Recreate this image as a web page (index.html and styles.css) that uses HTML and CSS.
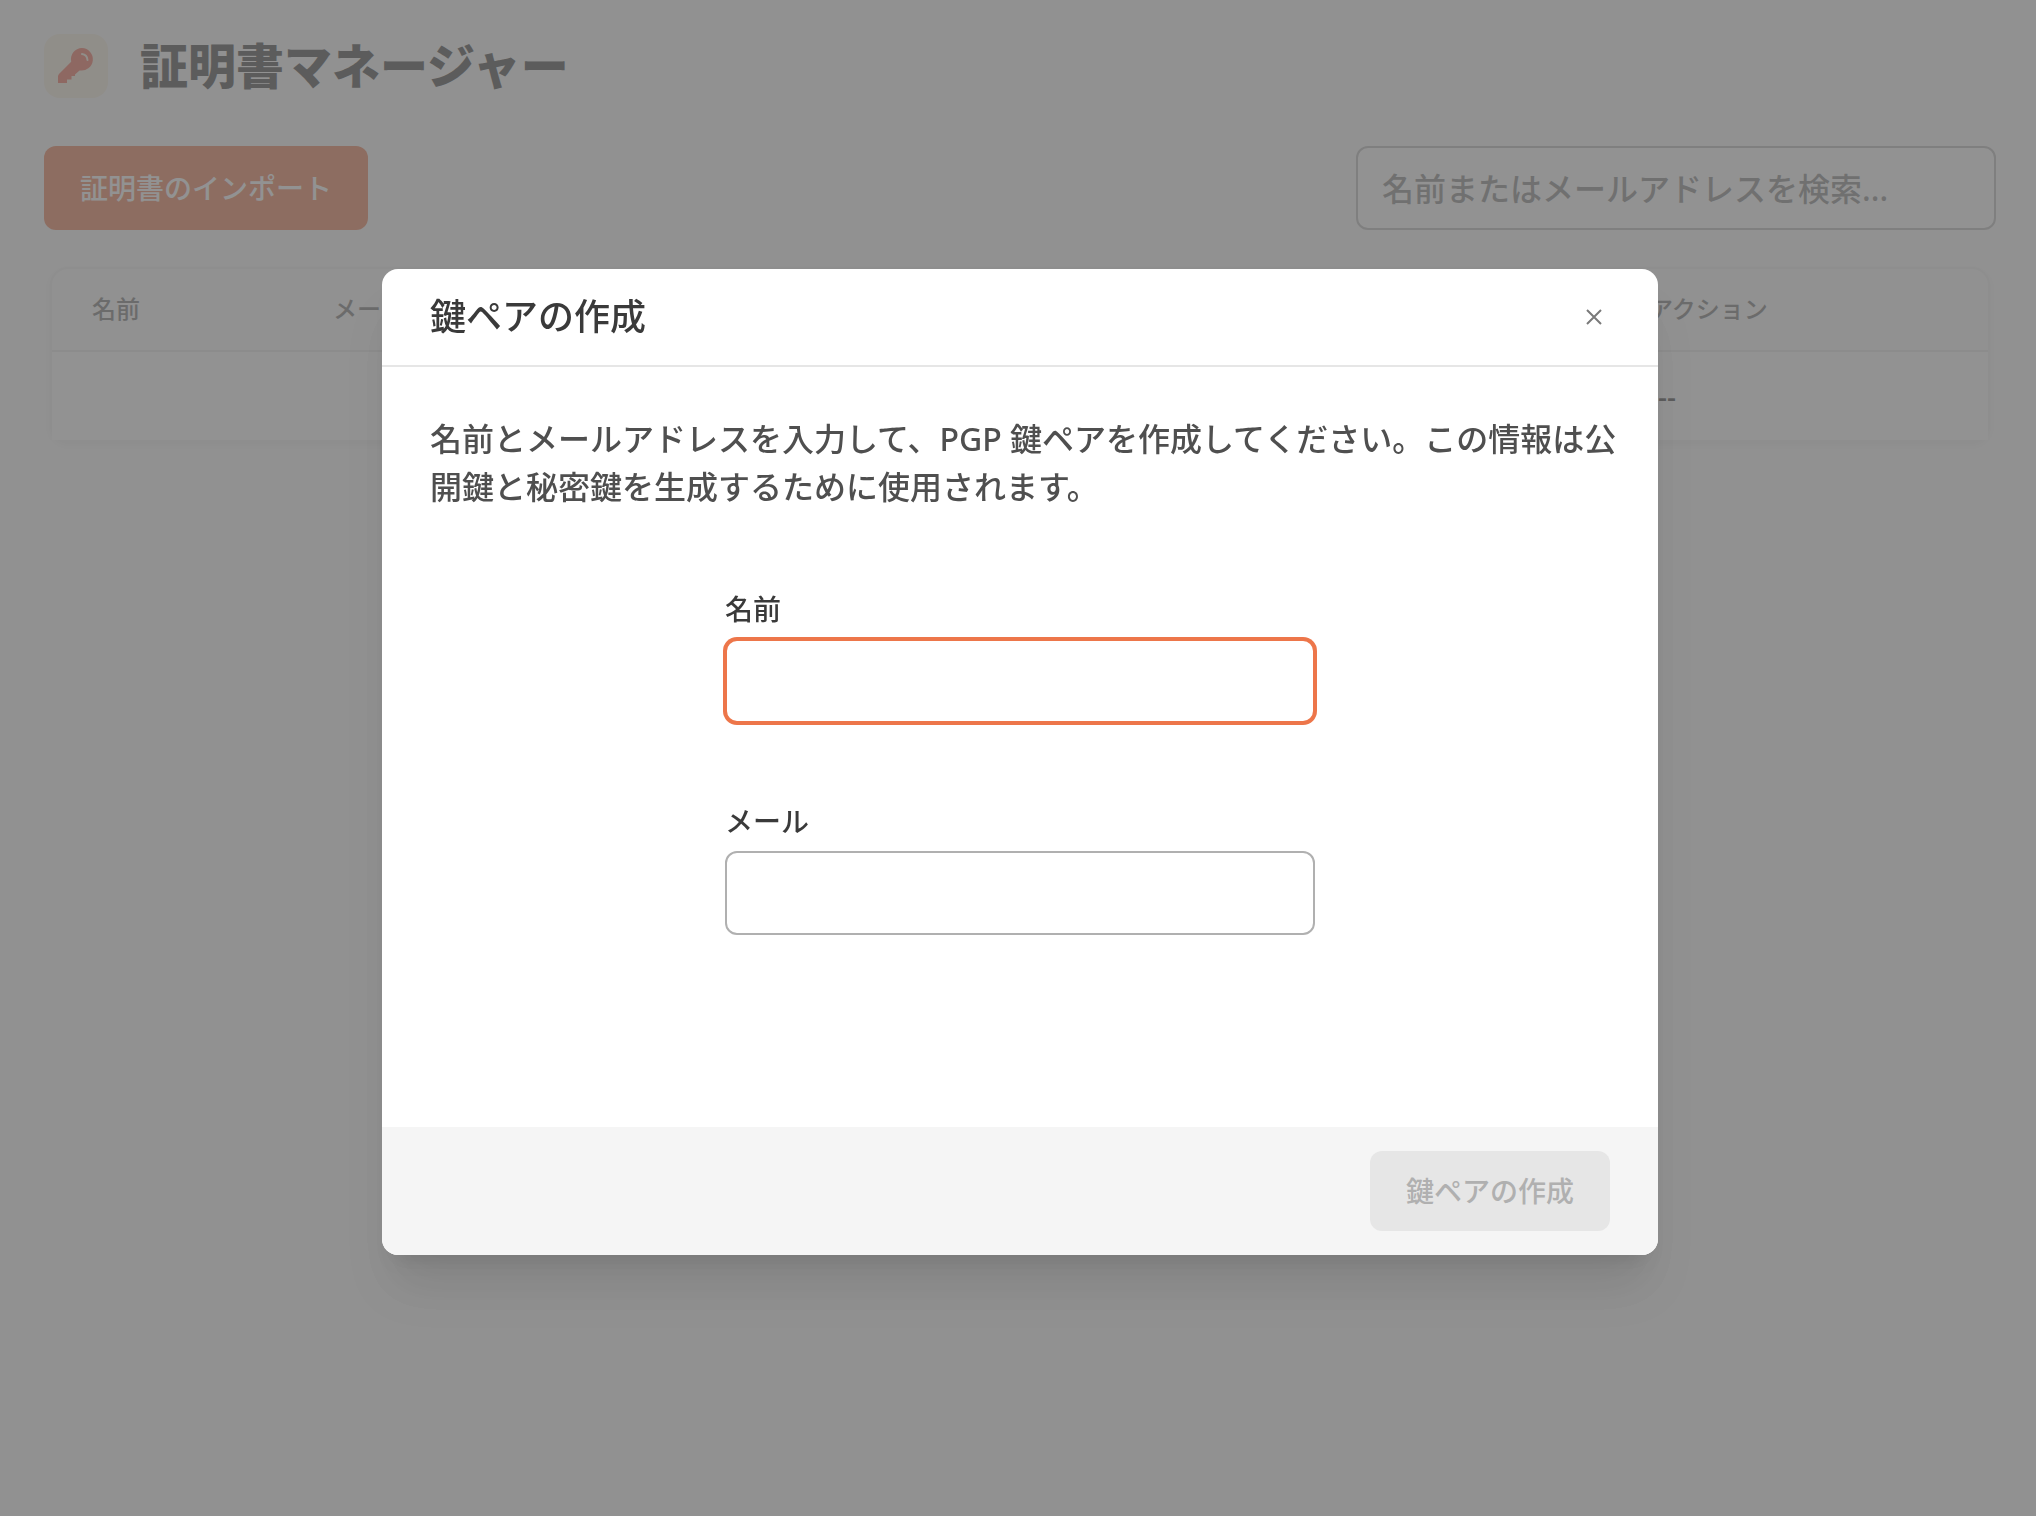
FILE: index.html
```html
<!DOCTYPE html>
<html lang="ja">
<head>
<meta charset="utf-8">
<meta name="viewport" content="width=device-width, initial-scale=1">
<title>証明書マネージャー</title>
<link rel="stylesheet" href="styles.css">
</head>
<body>
<main class="page">
  <header class="page-header">
    <span class="page-icon">
      <svg viewBox="0 0 64 64" width="64" height="64" aria-hidden="true">
        <path class="key-shape" d="M38 14a11.300 11.300 0 1 1-2.500 22.400L31 40.500V42h-3.500v3.500H23V49h-8.500q-.5 0-.5-.5v-6q0-1.500 1-2.500l12.200-12.200A11.300 11.300 0 0 1 38 14z"/>
        <path class="key-shine" d="M38 20q5 .5 5.500 6"/>
      </svg>
    </span>
    <h1 class="page-title">証明書マネージャー</h1>
  </header>
  <div class="toolbar">
    <button type="button" class="button button-primary">証明書のインポート</button>
    <input type="search" class="input search" aria-label="検索" placeholder="名前またはメールアドレスを検索...">
  </div>
  <div class="table-card">
    <table class="table">
      <colgroup><col class="col-name"><col><col class="col-action"></colgroup>
      <thead>
        <tr><th scope="col">名前</th><th scope="col">メール</th><th scope="col">アクション</th></tr>
      </thead>
      <tbody>
        <tr><td></td><td></td><td>---</td></tr>
      </tbody>
    </table>
  </div>
</main>
<div class="overlay">
  <form class="modal" role="dialog" aria-modal="true" aria-labelledby="modal-title">
    <header class="modal-header">
      <h2 class="modal-title" id="modal-title">鍵ペアの作成</h2>
      <button type="button" class="close" aria-label="閉じる">
        <svg viewBox="0 0 16 16" width="16" height="16" aria-hidden="true"><path d="M1 1l14 14M15 1L1 15"/></svg>
      </button>
    </header>
    <div class="modal-body">
      <p class="modal-text">名前とメールアドレスを入力して、PGP 鍵ペアを作成してください。この情報は公開鍵と秘密鍵を生成するために使用されます。</p>
      <div class="fields">
        <div class="field">
          <label for="name">名前</label>
          <input class="input input-active" id="name" type="text">
        </div>
        <div class="field">
          <label for="email">メール</label>
          <input class="input" id="email" type="email">
        </div>
      </div>
    </div>
    <footer class="modal-footer">
      <button type="submit" class="button button-submit" disabled>鍵ペアの作成</button>
    </footer>
  </form>
</div>
</body>
</html>
```
FILE: styles.css
```css
* {
  box-sizing: border-box;
}

body {
  margin: 0;
  min-height: 100vh;
  background: #fafafa;
  color: #3a3a3a;
  font-family: "Noto Sans", "Noto Sans CJK JP", sans-serif;
  font-weight: 500;
}

h1, h2, p {
  margin: 0;
}

button, input {
  font: inherit;
  color: inherit;
}

.page {
  padding: 34px 40px 48px 44px;
}

.page-header {
  display: flex;
  align-items: center;
  gap: 32px;
  height: 64px;
  margin-bottom: 48px;
}

.page-icon {
  width: 64px;
  height: 64px;
  border-radius: 16px;
  background: #f8eedd;
}

.page-icon svg {
  display: block;
}

.key-shape {
  fill: #f0644e;
}

.key-shine {
  fill: none;
  stroke: #f8eedd;
  stroke-width: 2;
  stroke-linecap: round;
}

.page-title {
  font-size: 48px;
  line-height: 64px;
  font-weight: 900;
}

.toolbar {
  display: flex;
  justify-content: space-between;
  align-items: center;
}

.button {
  padding: 0 36px;
  border: 0;
  border-radius: 12px;
  font-size: 28px;
  line-height: 40px;
}

.button-primary {
  height: 84px;
  background: #ed764a;
  color: #fff;
}

.input {
  height: 84px;
  padding: 0 24px;
  border: 2px solid #b0b0b0;
  border-radius: 12px;
  background: #fff;
  font-size: 32px;
  outline: none;
}

.search {
  width: 640px;
  border-color: #b8b8b8;
  appearance: none;
}

.search::placeholder {
  color: #838383;
  opacity: 1;
}

.table-card {
  margin: 39px 8px 0;
  border-radius: 16px;
  box-shadow: 0 0 0 2px #f0f0f0, 0 3px 8px #e4e4e4;
  background: #fafafa;
}

.table {
  width: 100%;
  border-spacing: 0;
  table-layout: fixed;
  text-align: left;
}

.col-name {
  width: 241px;
}

.col-action {
  width: 379px;
}

.table th {
  height: 83px;
  padding: 0 40px 2px;
  border-bottom: 2px solid #e8e8e8;
  color: #707070;
  font-size: 24px;
  line-height: 32px;
  font-weight: 500;
}

.table td {
  height: 88px;
  padding: 0 40px;
  background: #fff;
  font-size: 28px;
}

.overlay {
  position: fixed;
  inset: 0;
  display: flex;
  align-items: center;
  justify-content: center;
  padding: 8px 0 0 4px;
  background: rgba(105, 105, 105, 0.73);
}

.modal {
  display: flex;
  flex-direction: column;
  width: 1276px;
  max-width: 100%;
  max-height: 100%;
  overflow: auto;
  border-radius: 16px;
  background: #fff;
  box-shadow: 0 40px 50px -10px rgba(0, 0, 0, 0.1), 0 16px 20px -12px rgba(0, 0, 0, 0.1);
}

.modal-header {
  display: flex;
  align-items: center;
  justify-content: space-between;
  padding: 24px 48px;
  border-bottom: 2px solid #e6e6e6;
}

.modal-title {
  font-size: 36px;
  line-height: 48px;
  font-weight: 500;
}

.close {
  display: grid;
  place-items: center;
  width: 32px;
  height: 32px;
  padding: 0;
  border: 0;
  background: none;
}

.close path {
  fill: none;
  stroke: #7a7a7a;
  stroke-width: 2;
}

.modal-body {
  padding: 48px 48px 192px;
}

.modal-text {
  margin-right: -16px;
  color: #4f4f4f;
  font-size: 32px;
  line-height: 48px;
}

.fields {
  display: grid;
  gap: 78px;
  width: 50%;
  margin: 78px auto 0;
}

.field {
  display: grid;
  gap: 10px;
}

.field label {
  font-size: 28px;
  line-height: 40px;
}

.field .input {
  width: 100%;
}

.field .input-active {
  border-color: #ed764a;
  box-shadow: 0 0 0 2px #ed764a;
}

.modal-footer {
  display: flex;
  justify-content: flex-end;
  padding: 24px 48px;
  background: #f5f5f5;
}

.button-submit {
  height: 80px;
  background: #e6e6e6;
  color: #b0b0b0;
}
```
